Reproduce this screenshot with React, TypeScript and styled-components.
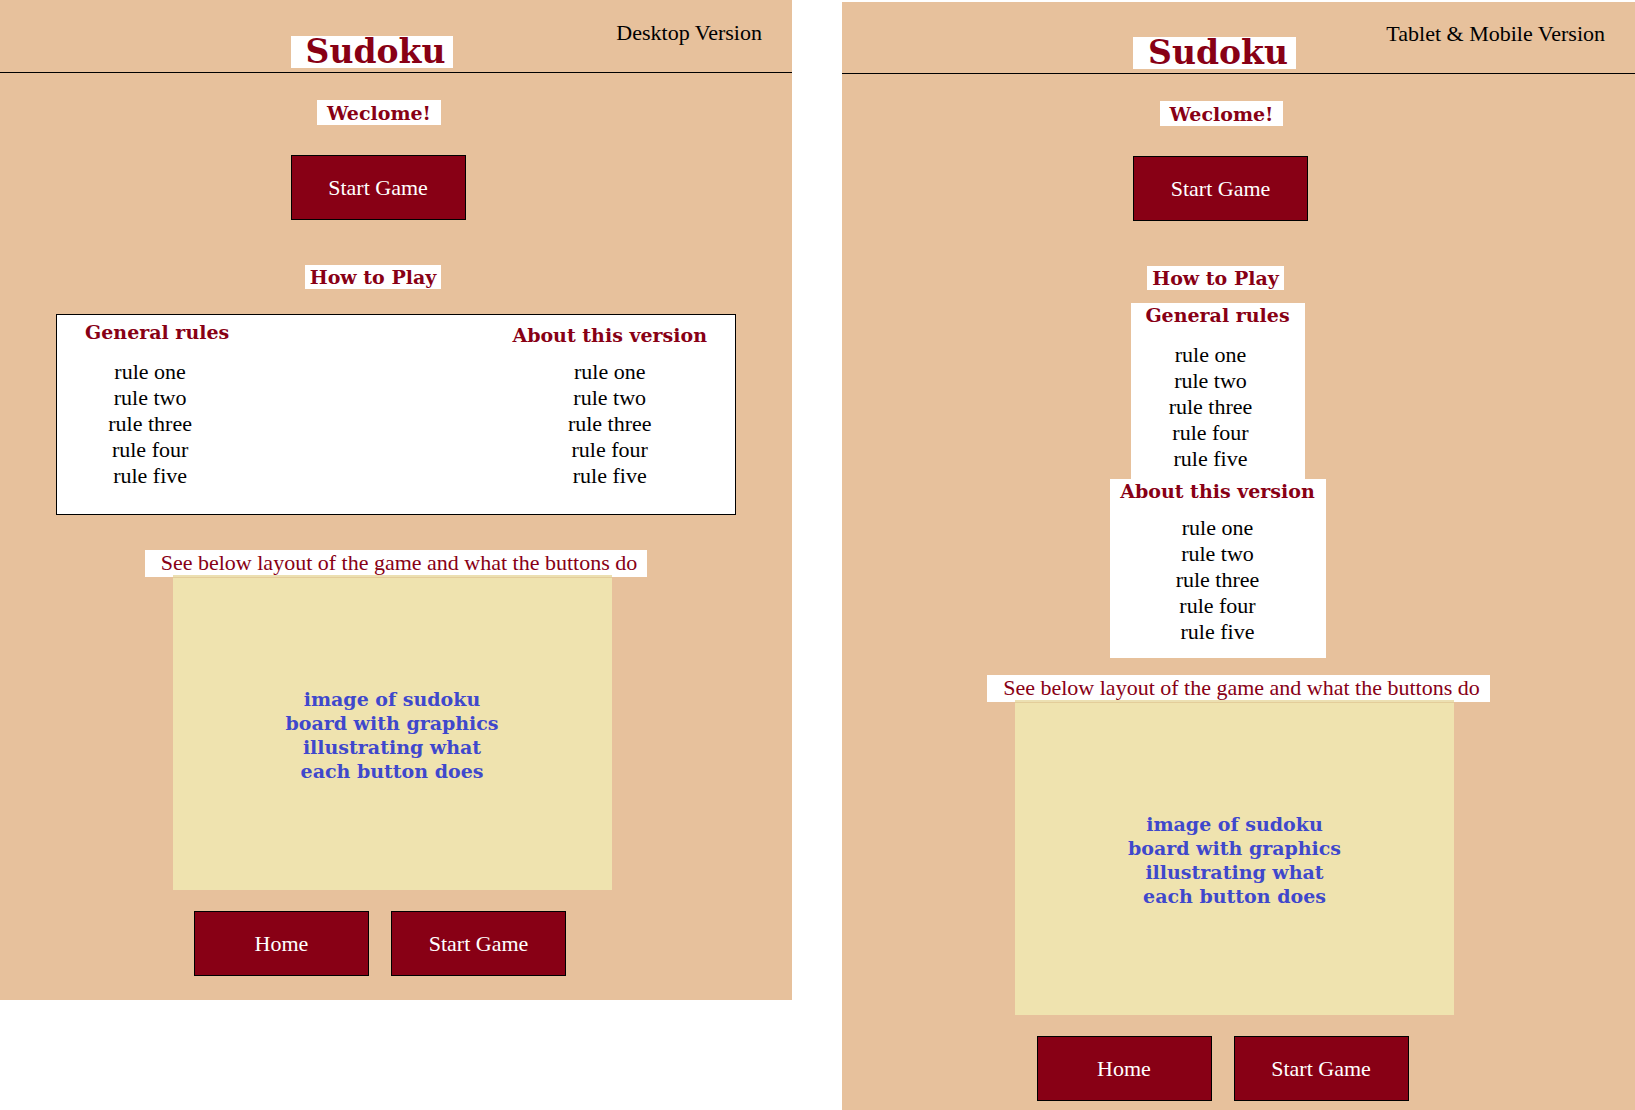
import React from "react";
import styled, { createGlobalStyle } from "styled-components";

const color = {
  sand: "#e7c19c",
  maroon: "#880015",
  cream: "#efe3af",
  ink: "#000000",
  blue: "#3f48cc",
};

const GlobalStyle = createGlobalStyle`
  *, *::before, *::after { box-sizing: border-box; }
  body {
    margin: 0;
    background: #ffffff;
    color: ${color.ink};
    font-family: "Liberation Serif", "Times New Roman", serif;
    font-size: 22px;
    line-height: 26px;
  }
  h1, h2, h3, p, ul { margin: 0; padding: 0; }
`;

const Page = styled.div`
  display: grid;
  grid-template-columns: 792fr 793fr;
  column-gap: 50px;
  align-items: start;
`;

const Panel = styled.article<{ $top?: number }>`
  display: flex;
  flex-direction: column;
  margin-top: ${(p) => p.$top ?? 0}px;
  background: ${color.sand};
`;

const Header = styled.header<{ $top: number }>`
  display: grid;
  padding: ${(p) => p.$top}px 0 4px;
  border-bottom: 1px solid ${color.ink};

  > * { grid-area: 1 / 1; }
`;

const VersionLabel = styled.p`
  justify-self: end;
  align-self: start;
  margin-top: -16px;
  padding-right: 30px;
`;

/* Centred row; the inset pulls its content to the left of the middle. */
const Row = styled.div<{ $inset?: number; $above?: number }>`
  display: flex;
  justify-content: center;
  gap: 22px;
  padding-right: ${(p) => p.$inset ?? 0}px;
  margin-top: ${(p) => p.$above ?? 0}px;
`;

const displayFace = `
  font-family: "DejaVu Serif", serif;
  font-weight: 700;
  font-size: 19px;
  line-height: 24px;
  white-space: nowrap;
`;

const Title = styled.h1`
  ${displayFace}
  padding: 0 8px 0 15px;
  background: #ffffff;
  color: ${color.maroon};
  font-size: 33px;
  line-height: 32px;
`;

const Tag = styled.h2<{ $pad: number; $top?: number }>`
  ${displayFace}
  padding: ${(p) => p.$top ?? 0}px ${(p) => p.$pad}px 0;
  background: #ffffff;
  color: ${color.maroon};
`;

const GameButton = styled.button`
  width: 175px;
  height: 65px;
  padding: 0;
  border: 1px solid ${color.ink};
  border-radius: 0;
  background: ${color.maroon};
  color: #ffffff;
  font: inherit;
  cursor: pointer;
`;

const WideRules = styled.div`
  display: flex;
  justify-content: space-between;
  align-items: flex-end;
  margin: 25px 56px 0;
  padding: 5px 28px 25px;
  border: 1px solid ${color.ink};
  background: #ffffff;
`;

const StackedRules = styled.div`
  display: flex;
  flex-direction: column;
  align-items: center;
  margin-top: 13px;
  padding-right: 42px;
`;

const StackedCard = styled.div<{ $width: number; $below: number }>`
  display: flex;
  justify-content: center;
  width: ${(p) => p.$width}px;
  padding-bottom: ${(p) => p.$below}px;
  background: #ffffff;
`;

const RuleGroup = styled.section`
  text-align: center;
`;

const RuleHeading = styled.h3<{ $gap: number }>`
  ${displayFace}
  margin-bottom: ${(p) => p.$gap}px;
  color: ${color.maroon};
`;

const RuleList = styled.ul<{ $inset: number }>`
  list-style: none;
  padding-right: ${(p) => p.$inset}px;
`;

const Caption = styled.p`
  padding: 0 10px 1px 16px;
  background: #ffffff;
  color: ${color.maroon};
`;

const BoardPreview = styled.div`
  display: flex;
  align-items: center;
  justify-content: center;
  width: 439px;
  height: 315px;
  margin-top: -2px;
  padding-top: 5px;
  background: linear-gradient(#ece0b2 2px, #e3cd9a 2px, #e3cd9a 3px, ${color.cream} 3px);
`;

const BoardText = styled.p`
  ${displayFace}
  width: 240px;
  color: ${color.blue};
  text-align: center;
`;

const Footer = styled.footer<{ $below: number }>`
  padding-bottom: ${(p) => p.$below}px;
`;

const rules = ["rule one", "rule two", "rule three", "rule four", "rule five"];

type RulesProps = { title: string; gap: number; inset?: number };

function Rules({ title, gap, inset = 0 }: RulesProps) {
  return (
    <RuleGroup>
      <RuleHeading $gap={gap}>{title}</RuleHeading>
      <RuleList $inset={inset}>
        {rules.map((rule) => (
          <li key={rule}>{rule}</li>
        ))}
      </RuleList>
    </RuleGroup>
  );
}

const generalRules = <Rules title="General rules" gap={15} inset={14} />;
const versionRules = <Rules title="About this version" gap={12} />;

function Intro({ label, headerTop }: { label: string; headerTop: number }) {
  return (
    <>
      <Header $top={headerTop}>
        <Row $inset={48}>
          <Title>Sudoku</Title>
        </Row>
        <VersionLabel>{label}</VersionLabel>
      </Header>
      <Row $inset={34} $above={27}>
        <Tag $pad={10} $top={1}>
          Weclome!
        </Tag>
      </Row>
      <Row $inset={36} $above={30}>
        <GameButton type="button">Start Game</GameButton>
      </Row>
      <Row $inset={46} $above={45}>
        <Tag $pad={5}>How to Play</Tag>
      </Row>
    </>
  );
}

function GameGuide({ above, below }: { above: number; below: number }) {
  return (
    <>
      <Row $above={above}>
        <Caption>See below layout of the game and what the buttons do</Caption>
      </Row>
      <Row $inset={8}>
        <BoardPreview>
          <BoardText>
            image of sudoku
            <br />
            board with graphics
            <br />
            illustrating what
            <br />
            each button does
          </BoardText>
        </BoardPreview>
      </Row>
      <Footer $below={below}>
        <Row $inset={32} $above={21}>
          <GameButton type="button">Home</GameButton>
          <GameButton type="button">Start Game</GameButton>
        </Row>
      </Footer>
    </>
  );
}

export default function App() {
  return (
    <>
      <GlobalStyle />
      <Page>
        <Panel>
          <Intro label="Desktop Version" headerTop={36} />
          <WideRules>
            {generalRules}
            {versionRules}
          </WideRules>
          <GameGuide above={35} below={24} />
        </Panel>
        <Panel $top={2}>
          <Intro label="Tablet &amp; Mobile Version" headerTop={35} />
          <StackedRules>
            <StackedCard $width={174} $below={7}>
              {generalRules}
            </StackedCard>
            <StackedCard $width={216} $below={13}>
              {versionRules}
            </StackedCard>
          </StackedRules>
          <GameGuide above={17} below={10} />
        </Panel>
      </Page>
    </>
  );
}
